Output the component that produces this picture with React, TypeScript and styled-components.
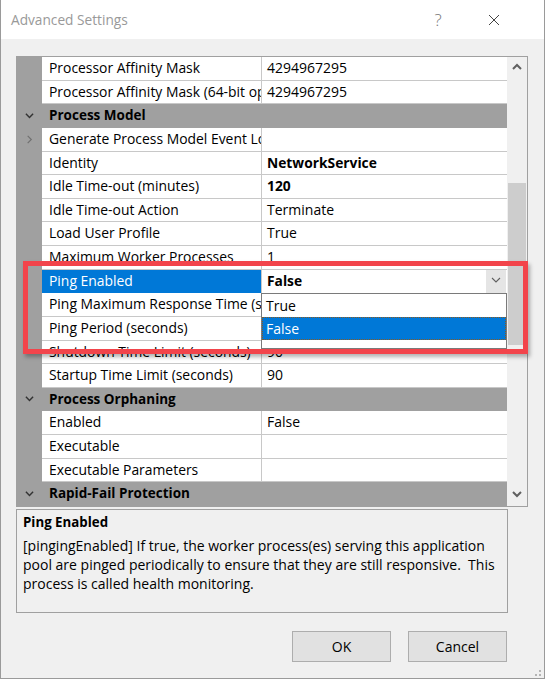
import styled, { createGlobalStyle } from 'styled-components';

const FONT = '"Open Sans", "Segoe UI", "Liberation Sans", Arial, sans-serif';
const ROW_H = 449 / 19;

type GridRow =
  | { kind: 'category'; label: string }
  | {
      kind: 'property';
      name: string;
      value?: string;
      bold?: boolean;
      expandable?: boolean;
      selected?: boolean;
    };

const rows: GridRow[] = [
  { kind: 'property', name: 'Processor Affinity Mask', value: '4294967295' },
  { kind: 'property', name: 'Processor Affinity Mask (64-bit option)', value: '4294967295' },
  { kind: 'category', label: 'Process Model' },
  { kind: 'property', name: 'Generate Process Model Event Log Entry', expandable: true },
  { kind: 'property', name: 'Identity', value: 'NetworkService', bold: true },
  { kind: 'property', name: 'Idle Time-out (minutes)', value: '120', bold: true },
  { kind: 'property', name: 'Idle Time-out Action', value: 'Terminate' },
  { kind: 'property', name: 'Load User Profile', value: 'True' },
  { kind: 'property', name: 'Maximum Worker Processes', value: '1' },
  { kind: 'property', name: 'Ping Enabled', value: 'False', bold: true, selected: true },
  { kind: 'property', name: 'Ping Maximum Response Time (seconds)', value: '90' },
  { kind: 'property', name: 'Ping Period (seconds)', value: '30' },
  { kind: 'property', name: 'Shutdown Time Limit (seconds)', value: '90' },
  { kind: 'property', name: 'Startup Time Limit (seconds)', value: '90' },
  { kind: 'category', label: 'Process Orphaning' },
  { kind: 'property', name: 'Enabled', value: 'False' },
  { kind: 'property', name: 'Executable' },
  { kind: 'property', name: 'Executable Parameters' },
  { kind: 'category', label: 'Rapid-Fail Protection' },
];

const description =
  '[pingingEnabled] If true, the worker process(es) serving this application\n' +
  'pool are pinged periodically to ensure that they are still responsive.  This\n' +
  'process is called health monitoring.';

function Chevron({ dir, color, size = 9, weight = 1.6 }: { dir: 'up' | 'down' | 'right'; color: string; size?: number; weight?: number }) {
  const points =
    dir === 'up' ? '1,6 5,2 9,6' : dir === 'down' ? '1,2 5,6 9,2' : '3,1 7,5 3,9';
  return (
    <svg width={size} height={size} viewBox="0 0 10 10">
      <polyline points={points} fill="none" stroke={color} strokeWidth={weight} />
    </svg>
  );
}

function App() {
  return (
    <>
      <GlobalStyle />
      <Window>
        <TitleBar>
          <Title>Advanced Settings</Title>
          <CaptionButton>?</CaptionButton>
          <CaptionButton>
            <svg width="12" height="12" viewBox="0 0 12 12">
              <path d="M1 1 L11 11 M11 1 L1 11" stroke="#444" strokeWidth="1" />
            </svg>
          </CaptionButton>
        </TitleBar>

        <Body>
          <GridFrame>
            <List>
              {rows.map((row, i) =>
                row.kind === 'category' ? (
                  <CategoryRow key={i}>
                    <Gutter>
                      <Chevron dir="down" color="#333" />
                    </Gutter>
                    <CategoryLabel>{row.label}</CategoryLabel>
                  </CategoryRow>
                ) : (
                  <PropRow key={i}>
                    <Gutter>{row.expandable && <Chevron dir="right" color="#707070" weight={1.3} />}</Gutter>
                    <NameCell $selected={row.selected}>{row.name}</NameCell>
                    {row.selected ? (
                      <ValueCell $bold>
                        <ValueText>{row.value}</ValueText>
                        <ComboButton>
                          <Chevron dir="down" color="#606060" size={10} weight={1.1} />
                        </ComboButton>
                        <Dropdown>
                          <DropItem>True</DropItem>
                          <DropItem $active>False</DropItem>
                        </Dropdown>
                      </ValueCell>
                    ) : (
                      <ValueCell $bold={row.bold}>
                        <ValueText>{row.value}</ValueText>
                      </ValueCell>
                    )}
                  </PropRow>
                ),
              )}
            </List>
            <Scrollbar>
              <ScrollArrow>
                <Chevron dir="up" color="#606060" size={10} weight={2} />
              </ScrollArrow>
              <ScrollTrack>
                <Thumb />
              </ScrollTrack>
              <ScrollArrow>
                <Chevron dir="down" color="#606060" size={10} weight={2} />
              </ScrollArrow>
            </Scrollbar>
          </GridFrame>

          <DescPanel>
            <DescTitle>Ping Enabled</DescTitle>
            <DescText>{description}</DescText>
          </DescPanel>

          <ButtonRow>
            <DialogButton type="button">OK</DialogButton>
            <DialogButton type="button">Cancel</DialogButton>
          </ButtonRow>
        </Body>

        <Highlight />
        <Grip>
          <svg width="12" height="12" viewBox="0 0 12 12" fill="#b4b4b4">
            <rect x="9" y="1" width="2" height="2" />
            <rect x="5" y="5" width="2" height="2" />
            <rect x="9" y="5" width="2" height="2" />
            <rect x="1" y="9" width="2" height="2" />
            <rect x="5" y="9" width="2" height="2" />
            <rect x="9" y="9" width="2" height="2" />
          </svg>
        </Grip>
      </Window>
    </>
  );
}
export default App;

const GlobalStyle = createGlobalStyle`
  html, body {
    margin: 0;
    padding: 0;
    background: #fff;
  }
  body {
    font-family: ${FONT};
    color: #000;
  }
`;

const Window = styled.div`
  position: relative;
  width: 545px;
  height: 679px;
  box-sizing: border-box;
  border: 1px solid #9a9a9a;
  border-top: none;
  background: #f0f0f0;
  display: flex;
  flex-direction: column;
  overflow: hidden;
`;

const TitleBar = styled.div`
  height: 39px;
  flex-shrink: 0;
  background: #fff;
  display: flex;
  align-items: center;
  padding: 0 22px 0 10px;
`;

const Title = styled.div`
  flex: 1;
  font-size: 13.7px;
  color: #999;
`;

const CaptionButton = styled.div`
  width: 56px;
  height: 39px;
  display: flex;
  align-items: center;
  justify-content: center;
  color: #777;
  font-size: 17px;
  font-weight: 300;
`;

const Body = styled.div`
  display: flex;
  flex-direction: column;
  padding: 17px 0 0 15px;
`;

const GridFrame = styled.div`
  display: flex;
  width: 512px;
  height: 451px;
  box-sizing: border-box;
  border: 1px solid #a0a0a0;
  background: #fff;
`;

const List = styled.div`
  position: relative;
  width: 490px;
  display: flex;
  flex-direction: column;
  overflow: hidden;
`;

const PropRow = styled.div`
  display: grid;
  grid-template-columns: 25px 220px 245px;
  height: ${ROW_H}px;
  flex-shrink: 0;
  font-size: 13.9px;
  line-height: ${ROW_H - 1}px;
`;

const CategoryRow = styled.div`
  display: grid;
  grid-template-columns: 25px 1fr;
  height: ${ROW_H}px;
  flex-shrink: 0;
  background: #a0a0a0;
  line-height: ${ROW_H}px;
`;

const Gutter = styled.div`
  background: #a0a0a0;
  display: flex;
  align-items: center;
  justify-content: center;
`;

const CategoryLabel = styled.div`
  padding-left: 7px;
  font-size: 13.5px;
  font-weight: 700;
  white-space: nowrap;
  overflow: hidden;
`;

const NameCell = styled.div<{ $selected?: boolean }>`
  box-sizing: border-box;
  padding-left: 7px;
  border-right: 1px solid #c8c8c8;
  border-bottom: 1px solid #c8c8c8;
  background: ${({ $selected }) => ($selected ? '#0078d7' : '#fff')};
  color: ${({ $selected }) => ($selected ? '#fff' : '#000')};
  white-space: nowrap;
  overflow: hidden;
`;

const ValueCell = styled.div<{ $bold?: boolean }>`
  position: relative;
  display: flex;
  border-bottom: 1px solid #c8c8c8;
  background: #fff;
  font-weight: ${({ $bold }) => ($bold ? 700 : 400)};
  font-size: ${({ $bold }) => ($bold ? '13.8px' : '14px')};
`;

const ValueText = styled.div`
  flex: 1;
  padding-left: 5px;
  white-space: nowrap;
  overflow: hidden;
`;

const ComboButton = styled.div`
  width: 20px;
  height: 23px;
  margin-right: 1px;
  background: #e5e5e5;
  display: flex;
  align-items: center;
  justify-content: center;
`;

const Dropdown = styled.div`
  position: absolute;
  top: 100%;
  left: -1px;
  right: 0;
  height: 56px;
  box-sizing: border-box;
  border: 1px solid #7a7a7a;
  background: #fff;
  z-index: 2;
  font-weight: 400;
  font-size: 14px;
`;

const DropItem = styled.div<{ $active?: boolean }>`
  height: 23px;
  line-height: 22px;
  box-sizing: border-box;
  padding-left: 3px;
  border: 1px ${({ $active }) => ($active ? 'dotted #8a5a20' : 'solid transparent')};
  background: ${({ $active }) => ($active ? '#0078d7' : '#fff')};
  color: ${({ $active }) => ($active ? '#fff' : '#000')};
`;

const Scrollbar = styled.div`
  width: 20px;
  background: #f0f0f0;
  display: flex;
  flex-direction: column;
`;

const ScrollArrow = styled.div`
  height: 22px;
  display: flex;
  align-items: center;
  justify-content: center;
`;

const ScrollTrack = styled.div`
  flex: 1;
  padding-top: 104px;
`;

const Thumb = styled.div`
  margin-left: 1px;
  width: 18px;
  height: 162px;
  background: #cdcdcd;
`;

const DescPanel = styled.div`
  margin-top: 2px;
  width: 492px;
  height: 104px;
  box-sizing: border-box;
  border: 1px solid #a0a0a0;
  padding: 3px 6px;
  font-size: 14px;
  line-height: 19px;
`;

const DescTitle = styled.div`
  font-weight: 700;
  font-size: 13.3px;
  margin-bottom: 4px;
`;

const DescText = styled.div`
  white-space: pre-wrap;
`;

const ButtonRow = styled.div`
  width: 491px;
  margin-top: 18px;
  display: flex;
  justify-content: flex-end;
  gap: 17px;
`;

const DialogButton = styled.button`
  width: 99px;
  height: 31px;
  box-sizing: border-box;
  border: 1px solid #adadad;
  background: #e1e1e1;
  font-family: ${FONT};
  font-size: 14px;
  color: #000;
  padding: 0;
`;

const Highlight = styled.div`
  position: absolute;
  left: 22px;
  top: 261px;
  width: 505px;
  height: 93px;
  box-sizing: border-box;
  border: 5px solid #f2444b;
  box-shadow: 2px 3px 4px rgba(0, 0, 0, 0.3);
  pointer-events: none;
  z-index: 5;
`;

const Grip = styled.div`
  position: absolute;
  right: 2px;
  bottom: 2px;
  width: 12px;
  height: 12px;
`;
